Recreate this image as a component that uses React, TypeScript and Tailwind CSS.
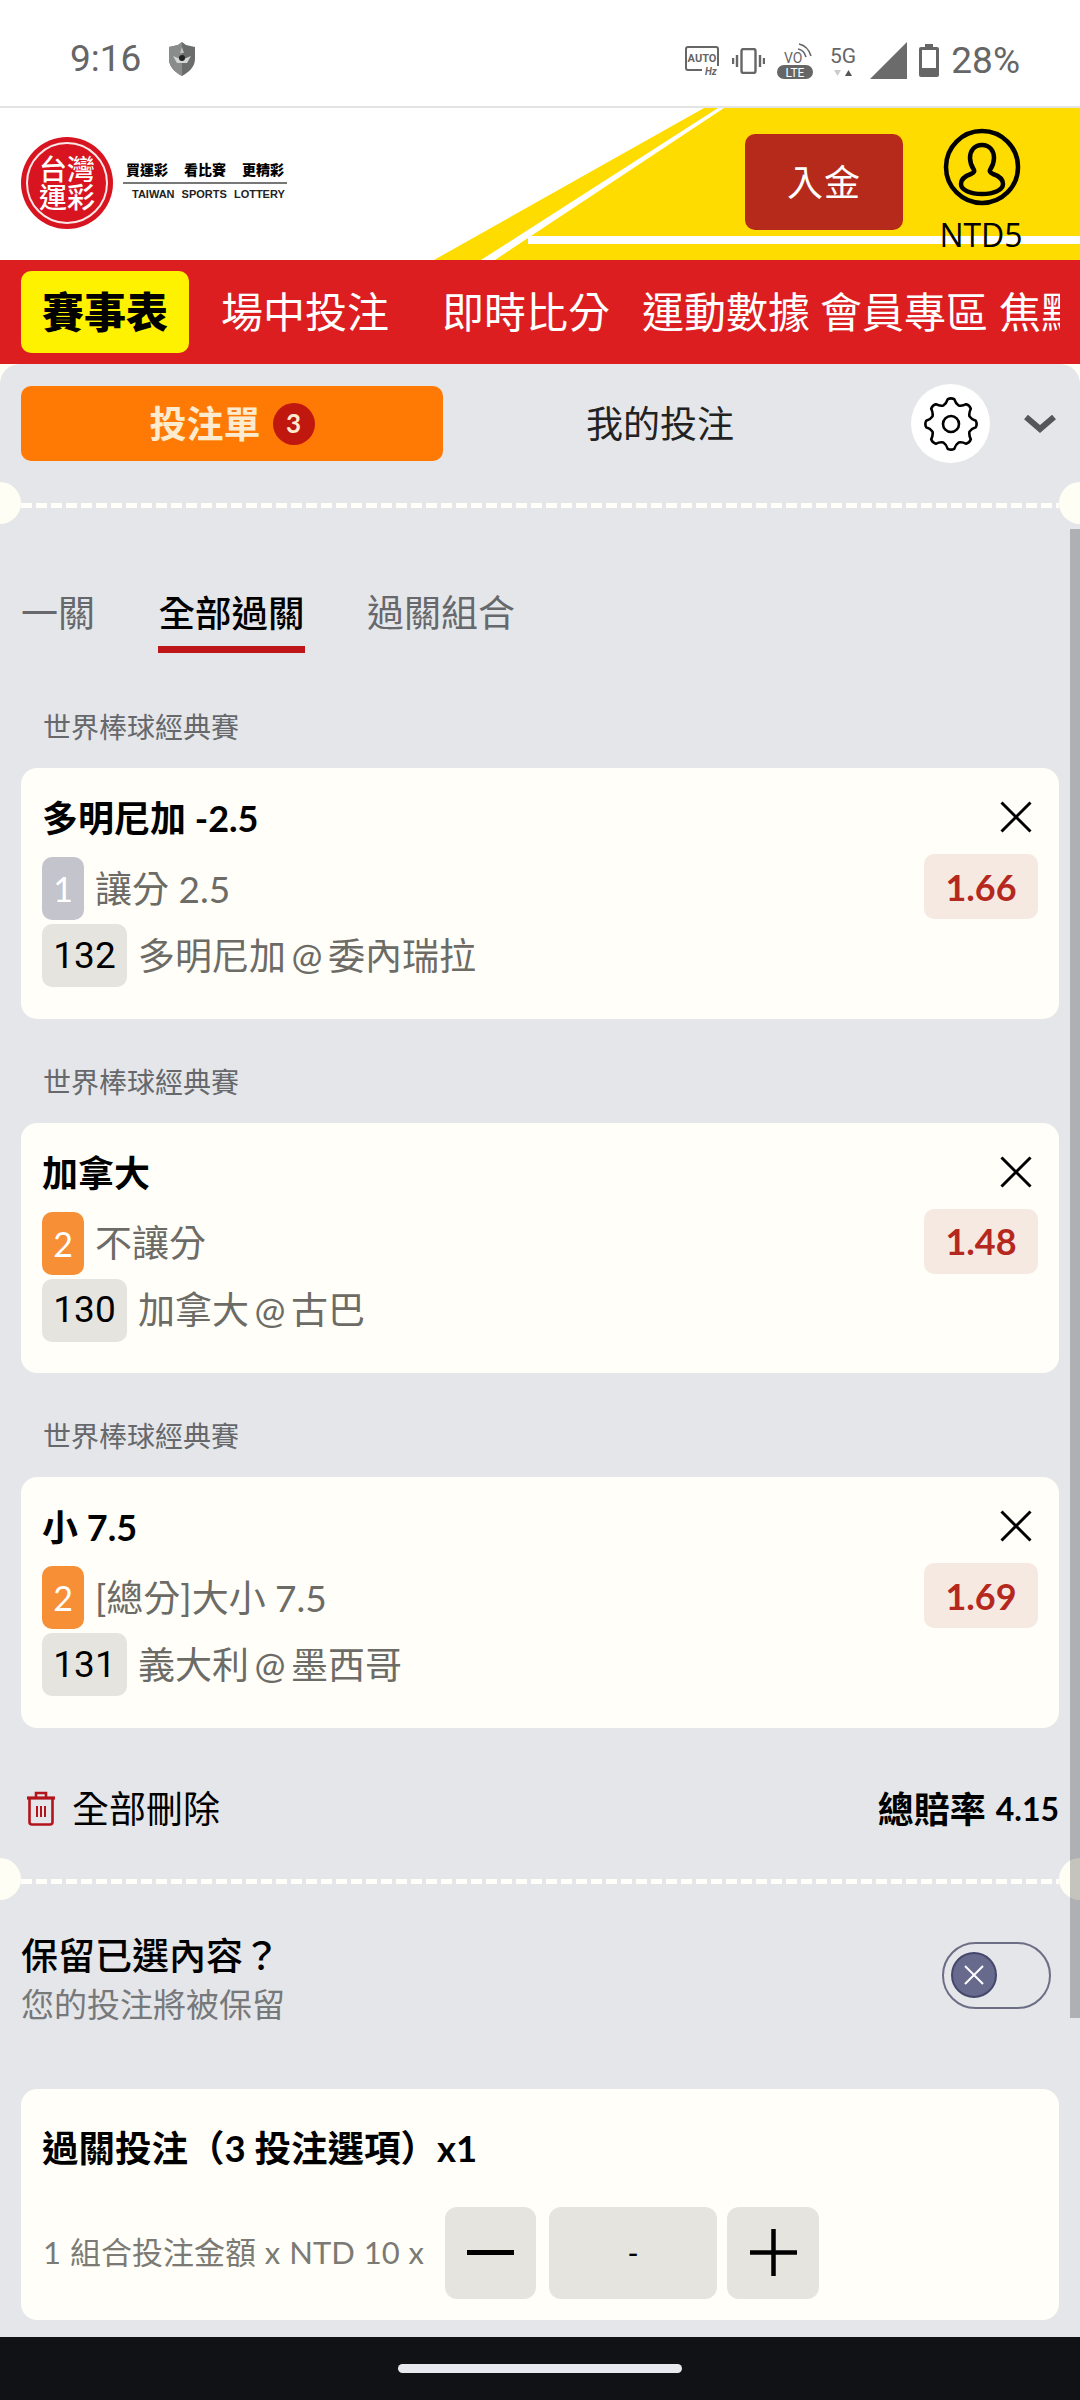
const bets = [
  { title: '多明尼加 -2.5', badge: '1', badgeColor: 'bg-[#c4c4cc]', market: '讓分 2.5', code: '132', match: '多明尼加 @ 委內瑞拉', odds: '1.66' },
  { title: '加拿大', badge: '2', badgeColor: 'bg-[#f78f37]', market: '不讓分', code: '130', match: '加拿大 @ 古巴', odds: '1.48' },
  { title: '小 7.5', badge: '2', badgeColor: 'bg-[#f78f37]', market: '[總分]大小 7.5', code: '131', match: '義大利 @ 墨西哥', odds: '1.69' },
];

// 8 lobed cog outline, same as the settings button in the reference
function gearPath() {
  const c = 27;
  const teeth = 8;
  const step = (Math.PI * 2) / teeth;
  const pt = (a: number, r: number) => `${(c + r * Math.cos(a)).toFixed(2)} ${(c + r * Math.sin(a)).toFixed(2)}`;
  let d = '';
  for (let i = 0; i < teeth; i++) {
    const a = i * step - Math.PI / 2;
    d += i === 0 ? `M${pt(a - 0.13, 25)}` : `L${pt(a - 0.13, 25)}`;
    d += ` Q${pt(a, 26.5)} ${pt(a + 0.13, 25)}`;
    d += ` Q${pt(a + 0.22, 21)} ${pt(a + step / 2, 20)}`;
    d += ` Q${pt(a + step - 0.22, 21)} ${pt(a + step - 0.13, 25)} `;
  }
  return d + 'Z';
}

function GearIcon() {
  return (
    <svg width="54" height="54" viewBox="0 0 54 54" fill="none" stroke="#000" strokeWidth="2.6" strokeLinejoin="round">
      <path d={gearPath()} />
      <circle cx="27" cy="27" r="8" />
    </svg>
  );
}

function Shield() {
  return (
    <svg width="26" height="34" viewBox="0 0 26 34" className="ml-[28px]">
      <path d="M13 0 L17 3 L26 5 V17 C26 25 20 30 13 34 C6 30 0 25 0 17 V5 L9 3 Z" fill="#6b6d6d" />
      <path d="M13 0 V34 C6 30 0 25 0 17 V5 L9 3 Z" fill="#8a8c8c" />
      <path d="M4 14 L11 17 H15 L22 14 L18 21 H8 Z" fill="#d4d5d5" />
      <circle cx="13" cy="16" r="3" fill="#222" />
      <path d="M13 5 L15 11 H11 Z" fill="#c0c1c1" />
    </svg>
  );
}

function AutoIcon() {
  return (
    <svg width="34" height="30" viewBox="0 0 34 30">
      <path d="M17 24 H3 Q1 24 1 22 V3 Q1 1 3 1 H31 Q33 1 33 3 V20" fill="none" stroke="#666" strokeWidth="2" />
      <text x="17" y="16" textAnchor="middle" fontSize="11" fontWeight="700" fontFamily="Roboto" fill="#666">AUTO</text>
      <text x="20" y="29" fontSize="10" fontWeight="700" fontStyle="italic" fontFamily="Roboto" fill="#666">Hz</text>
    </svg>
  );
}

function VibrateIcon() {
  return (
    <svg width="33" height="26" viewBox="0 0 33 26" fill="none" stroke="#666">
      <rect x="9.5" y="1" width="14" height="24" rx="2" strokeWidth="2.4" />
      <path d="M5 7 V19 M1 10 V16 M28 7 V19 M32 10 V16" strokeWidth="2.4" />
    </svg>
  );
}

function VoLteIcon() {
  return (
    <svg width="36" height="36" viewBox="0 0 36 36">
      <text x="7" y="20" fontSize="14" fontFamily="Roboto" fill="#666">VO</text>
      <path d="M21 6 Q27 7 29 14 M22 1 Q31 3 34 13" fill="none" stroke="#666" strokeWidth="1.6" />
      <rect x="0" y="22" width="36" height="14" rx="7" fill="#666" />
      <text x="18" y="33.5" textAnchor="middle" fontSize="12" fontFamily="Roboto" fill="#fff">LTE</text>
    </svg>
  );
}

function FiveGIcon() {
  return (
    <svg width="28" height="36" viewBox="0 0 28 36">
      <text x="14" y="20" textAnchor="middle" fontSize="21" fontFamily="Roboto" fill="#666">5G</text>
      <path d="M5 27 H12 L8.5 33 Z" fill="#ccc" />
      <path d="M16 33 H23 L19.5 27 Z" fill="#555" />
    </svg>
  );
}

function SignalIcon() {
  return (
    <svg width="37" height="37" viewBox="0 0 37 37">
      <path d="M0 37 L37 0 V37 Z" fill="#6b6b6b" />
    </svg>
  );
}

function BatteryIcon() {
  return (
    <svg width="20" height="33" viewBox="0 0 20 33">
      <path d="M6 0 H14 V3 H18 Q20 3 20 5 V31 Q20 33 18 33 H2 Q0 33 0 31 V5 Q0 3 2 3 H6 Z" fill="#666" />
      <rect x="3" y="6" width="14" height="18" fill="#fff" />
    </svg>
  );
}

function UserIcon() {
  return (
    <svg width="78" height="78" viewBox="0 0 78 78" fill="none" stroke="#000" strokeWidth="4.5">
      <circle cx="39" cy="39" r="36" />
      <path d="M39 17 c-8 0 -12 6 -12 13 c0 5 2 9 4 12 c1 2 -1 3 -3 4 c-6 2 -10 5 -10 10 c0 6 9 10 21 10 s21 -4 21 -10 c0 -5 -4 -8 -10 -10 c-2 -1 -4 -2 -3 -4 c2 -3 4 -7 4 -12 c0 -7 -4 -13 -12 -13 z" />
    </svg>
  );
}

function TrashIcon() {
  return (
    <svg width="30" height="35" viewBox="0 0 30 35" fill="none" stroke="#b3141c" strokeWidth="2.6">
      <path d="M10 6 V2 H20 V6" />
      <path d="M1 7 H29" strokeWidth="3.2" />
      <path d="M3.5 8 V31 Q3.5 33.5 6 33.5 H24 Q26.5 33.5 26.5 31 V8" />
      <path d="M11 15 V26 M15 15 V26 M19 15 V26" strokeWidth="2" />
    </svg>
  );
}

function CloseIcon() {
  return (
    <svg width="32" height="32" viewBox="0 0 32 32" stroke="#000" strokeWidth="3" className="mr-[6px] self-end">
      <path d="M1.5 1.5 L30.5 30.5 M30.5 1.5 L1.5 30.5" />
    </svg>
  );
}

function Dashed({ className }: { className: string }) {
  return (
    <div className={`relative h-[5px] ${className}`}>
      <div className="mx-[21px] h-[5px] bg-[repeating-linear-gradient(90deg,#fffef8_0_11px,transparent_11px_15px)]" />
      <div className="absolute left-[-21px] top-[-21px] w-[42px] h-[42px] rounded-full bg-[#fffef5]" />
      <div className="absolute right-[-21px] top-[-21px] w-[42px] h-[42px] rounded-full bg-[#fffef5]" />
    </div>
  );
}

export default function App() {
  return (
    <div className="w-[1080px] h-[2400px] flex flex-col overflow-hidden bg-white font-['Lato','Noto_Sans_CJK_TC',sans-serif]">
      {/* status bar */}
      <div className="h-[108px] shrink-0 flex items-center pt-[12px] border-b-2 border-[#e4e4e4] pl-[70px] pr-[60px]">
        <span className="text-[37px] text-[#666] font-['Roboto',sans-serif]">9:16</span>
        <Shield />
        <div className="ml-auto mt-[3px] flex items-center">
          <AutoIcon />
          <div className="ml-[13px]"><VibrateIcon /></div>
          <div className="ml-[12px]"><VoLteIcon /></div>
          <div className="ml-[16px]"><FiveGIcon /></div>
          <div className="ml-[13px]"><SignalIcon /></div>
          <div className="ml-[12px]"><BatteryIcon /></div>
          <span className="ml-[12px] text-[37px] text-[#666] font-['Roboto',sans-serif]">28%</span>
        </div>
      </div>

      {/* header */}
      <div className="relative h-[152px] shrink-0 flex items-start pl-[21px]">
        <svg width="1080" height="152" viewBox="0 0 1080 152" className="absolute left-0 top-0">
          <path d="M434 152 L704 0 H1080 V152 Z" fill="#ffdc00" />
          <path d="M718 0 H724 L495 152 H481 Z" fill="#fff" />
          <rect x="528" y="128" width="552" height="8" fill="#fff" />
        </svg>
        <div className="relative mt-[29px] w-[92px] h-[92px] rounded-full bg-[#d7141f] flex items-center justify-center">
          <div className="absolute inset-[5px] rounded-full border-2 border-white/90" />
          <div className="grid grid-cols-2 text-white text-[28px] leading-[28px] font-medium">
            <span>台</span><span>灣</span><span>運</span><span>彩</span>
          </div>
        </div>
        <div className="relative mt-[52px] ml-[10px] w-[164px]">
          <div className="flex h-[20px] items-center pl-[3px] gap-[16px] text-[14px] font-black text-black leading-none">
            <span>買運彩</span><span>看比賽</span><span>更精彩</span>
          </div>
          <div className="mt-[2px] h-[1.5px] bg-[#777]" />
          <div className="mt-[2px] pl-[9px] text-[11px] leading-[16px] font-bold [word-spacing:4px] text-[#222] whitespace-nowrap font-['Liberation_Sans',sans-serif]">TAIWAN SPORTS LOTTERY</div>
        </div>
        <div className="relative ml-auto mt-[26px] w-[158px] h-[96px] rounded-[10px] bg-[#b52a1a] flex items-center justify-center text-white text-[36px] tracking-[1px]">入金</div>
        <div className="relative ml-[39px] mr-[58px] mt-[20px] w-[80px] flex flex-col items-center">
          <UserIcon />
          <span className="mt-[9px] -ml-[2px] text-[32px] leading-[40px] text-black whitespace-nowrap font-['Open_Sans',sans-serif]">NTD5</span>
        </div>
      </div>

      {/* main nav */}
      <div className="h-[104px] shrink-0 flex items-center bg-[#dc1e20] text-white text-[42px] whitespace-nowrap">
        <div className="ml-[21px] w-[168px] h-[82px] rounded-[10px] bg-[#fff200] flex items-center justify-center text-black text-[42px] font-black">賽事表</div>
        <span className="ml-[32px]">場中投注</span>
        <span className="ml-[53px]">即時比分</span>
        <span className="ml-[32px]">運動數據</span>
        <span className="ml-[10px]">會員專區</span>
        <div className="ml-[11px] w-[61px] overflow-hidden"><span>焦點</span></div>
      </div>

      {/* bet slip */}
      <div className="flex-1 bg-[#fffef5]">
        <div className="relative h-full rounded-t-[20px] bg-[#e4e6e9] overflow-hidden">
          <div className="absolute right-0 top-[165px] w-[10px] h-[1489px] bg-black/[0.23] z-10" />

          <div className="pt-[20px] flex items-center h-[99px]">
            <div className="ml-[21px] w-[422px] h-[75px] rounded-[10px] bg-[#ff7a05] flex items-center justify-center">
              <span className="text-[37px] font-bold text-[#fdebd0]">投注單</span>
              <span className="ml-[12px] w-[42px] h-[42px] rounded-full bg-[#c0170f] flex items-center justify-center text-[26px] font-bold text-[#fdebd0]">3</span>
            </div>
            <span className="w-[434px] text-center text-[37px] text-[#222]">我的投注</span>
            <div className="ml-[34px] w-[79px] h-[79px] rounded-full bg-white flex items-center justify-center">
              <GearIcon />
            </div>
            <svg width="32" height="19" viewBox="0 0 32 19" fill="none" stroke="#55565a" strokeWidth="6" className="ml-[34px]">
              <path d="M2 3 L16 15 L30 3" />
            </svg>
          </div>

          <Dashed className="mt-[40px]" />

          <div className="mt-[80px] flex pl-[21px] text-[37px] leading-[50px] text-[#66686c] whitespace-nowrap">
            <span className="w-[74px]">一關</span>
            <div className="ml-[63px] w-[147px]">
              <div className="text-center text-[36.5px] font-medium text-black">全部過關</div>
              <div className="mt-[8px] h-[7px] bg-[#bd1518]" />
            </div>
            <span className="ml-[62px]">過關組合</span>
          </div>

          <div className="mt-[54px]">
            {bets.map((bet) => (
              <div key={bet.code} className="h-[354.5px]">
                <div className="h-[40px] pl-[43px] text-[28px] leading-[40px] text-[#66686c]">世界棒球經典賽</div>
                <div className="mt-[21px] mx-[21px] h-[250.5px] rounded-[16px] bg-[#fffef8] flex justify-between pl-[21px] pr-[21px]">
                  <div className="pt-[25px]">
                    <div className="h-[50px] text-[36px] leading-[50px] font-bold text-black">{bet.title}</div>
                    <div className="mt-[14px] flex items-center h-[63px]">
                      <span className={`w-[42px] h-[63px] rounded-[10px] flex items-center justify-center text-[34px] text-white ${bet.badgeColor}`}>{bet.badge}</span>
                      <span className="ml-[11px] text-[37px] text-[#6c6b65]">{bet.market}</span>
                    </div>
                    <div className="mt-[4px] flex items-center h-[63px]">
                      <span className="w-[85px] h-[63px] rounded-[10px] bg-[#e5e4df] flex items-center justify-center text-[37px] text-black font-['Roboto',sans-serif]">{bet.code}</span>
                      <span className="ml-[11px] text-[37px] [word-spacing:-4px] text-[#6c6b65]">{bet.match}</span>
                    </div>
                  </div>
                  <div className="pt-[33px] flex flex-col">
                    <CloseIcon />
                    <div className="mt-[21px] w-[114px] h-[65px] rounded-[10px] bg-[#f6e9e2] flex items-center justify-center text-[36px] font-bold text-[#b5281e]">{bet.odds}</div>
                  </div>
                </div>
              </div>
            ))}
          </div>

          <div className="mt-[13px] h-[50px] flex items-center pl-[26px] pr-[21px]">
            <TrashIcon />
            <span className="ml-[16px] text-[37px] text-black">全部刪除</span>
            <span className="ml-auto text-[36px] font-bold text-black">總賠率</span>
            <span className="ml-[10px] text-[32px] font-bold text-black">4.15</span>
          </div>

          <Dashed className="mt-[45px]" />

          <div className="mt-[48px] flex items-start pl-[21px] pr-[29px]">
            <div>
              <div className="h-[48px] text-[37px] leading-[48px] font-medium text-black">保留已選內容？</div>
              <div className="h-[48px] text-[33px] leading-[48px] text-[#77787a]">您的投注將被保留</div>
            </div>
            <div className="ml-auto mt-[10px] w-[109px] h-[67px] rounded-full border-2 border-[#6c6e85] flex items-center pl-[7px]">
              <div className="w-[46px] h-[46px] rounded-full bg-[#676a8c] border-2 border-[#45486a] flex items-center justify-center">
                <svg width="22" height="22" viewBox="0 0 22 22" stroke="#fff" strokeWidth="2">
                  <path d="M2 2 L20 20 M20 2 L2 20" />
                </svg>
              </div>
            </div>
          </div>

          <div className="mt-[61px] mx-[21px] h-[231px] rounded-[16px] bg-[#fffef8] pt-[34px]">
            <div className="pl-[21px] h-[50px] text-[36.5px] leading-[50px] font-bold text-black whitespace-nowrap">過關投注（3 投注選項）x1</div>
            <div className="mt-[34px] pl-[22px] flex items-center">
              <span className="w-[402px] text-[31px] [word-spacing:1px] text-[#7b7a74] whitespace-nowrap">1 組合投注金額 x NTD 10 x</span>
              <div className="w-[91px] h-[92px] rounded-[12px] bg-[#e5e4df] flex items-center justify-center">
                <div className="w-[47px] h-[5px] bg-black" />
              </div>
              <div className="ml-[13px] w-[168px] h-[92px] rounded-[12px] bg-[#e5e4df] flex items-center justify-center text-[30px] text-black">-</div>
              <div className="ml-[10px] w-[92px] h-[92px] rounded-[12px] bg-[#e5e4df] flex items-center justify-center">
                <svg width="47" height="47" viewBox="0 0 47 47" stroke="#000" strokeWidth="4.5">
                  <path d="M0 23.5 H47 M23.5 0 V47" />
                </svg>
              </div>
            </div>
          </div>
        </div>
      </div>

      {/* android nav */}
      <div className="h-[63px] shrink-0 bg-[#101216] flex justify-center pt-[27px]">
        <div className="w-[284px] h-[9px] rounded-full bg-[#e8e9ee]" />
      </div>
    </div>
  );
}
